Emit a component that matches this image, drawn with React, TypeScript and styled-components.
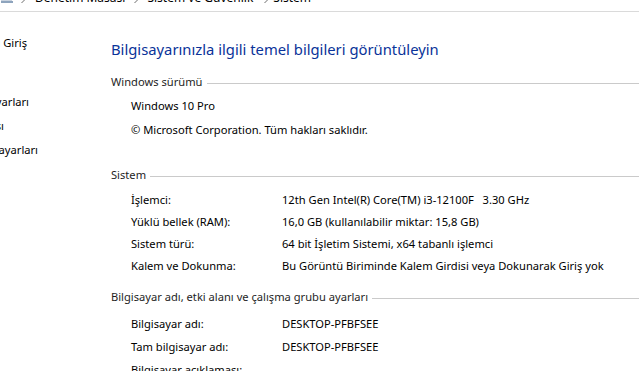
import React from 'react';
import styled, { createGlobalStyle } from 'styled-components';

const GlobalStyle = createGlobalStyle`
  html, body {
    margin: 0;
    padding: 0;
    background: #ffffff;
  }
  body {
    font-family: 'Noto Sans', 'Open Sans', sans-serif;
    font-size: 11.15px;
    color: #000000;
  }
`;

const Window = styled.div`
  width: 639px;
  height: 371px;
  overflow: hidden;
  background: #ffffff;
`;

// breadcrumb strip, scrolled so only the bottom of the text shows
const AddressBar = styled.div`
  height: 11px;
  border-bottom: 1px solid #dadada;
  overflow: hidden;
`;

const Crumbs = styled.div`
  display: flex;
  align-items: center;
  height: 18px;
  margin-top: -11px;
  line-height: 18px;
  font-size: 12px;
  color: #000;
`;

const Crumb = styled.span`
  margin-left: ${(p: { $gap: number }) => p.$gap}px;
  white-space: nowrap;
`;

const Chevron = styled.svg`
  width: 7px;
  height: 18px;
  margin-left: ${(p: { $gap: number }) => p.$gap}px;
  fill: none;
  stroke: #6d6d6d;
  stroke-width: 1;
`;

const Layout = styled.div`
  display: grid;
  grid-template-columns: 111px 1fr;
`;

const Nav = styled.nav`
  width: 60px;
  display: flex;
  flex-direction: column;
  overflow: hidden;
  padding-top: 21px;
`;

const NavLink = styled.div<{ $end: number; $top: number }>`
  display: flex;
  justify-content: flex-end;
  white-space: nowrap;
  height: 20px;
  line-height: 20px;
  margin-top: ${(p) => p.$top}px;
  padding-right: ${(p) => 60 - p.$end}px;
  color: #000;
`;

const Main = styled.main`
  display: flex;
  flex-direction: column;
`;

const Heading = styled.h1`
  margin: 26px 0 0;
  font-size: 14.8px;
  font-weight: 400;
  line-height: 22px;
  color: #0a3399;
  white-space: nowrap;
`;

const SectionTitle = styled.div<{ $top: number }>`
  display: flex;
  align-items: center;
  height: 20px;
  line-height: 20px;
  margin-top: ${(p) => p.$top}px;
  color: #1e1e1e;
  white-space: nowrap;

  &::after {
    content: '';
    flex: 1;
    height: 1px;
    margin: 2px 0 0 4px;
    background: #cacaca;
  }
`;

const Rows = styled.div<{ $top: number }>`
  display: flex;
  flex-direction: column;
  margin-top: ${(p) => p.$top}px;
  padding-left: 20px;
`;

const Row = styled.div<{ $h: number }>`
  display: grid;
  grid-template-columns: 151px 1fr;
  height: ${(p) => p.$h}px;
  line-height: ${(p) => p.$h}px;
  white-space: pre;
`;

const Label = styled.span<{ $wide?: boolean }>`
  grid-column: ${(p) => (p.$wide ? '1 / 3' : 'auto')};
`;
const Value = styled.span``;

const Field = ({ label, value, h }: { label: string; value?: string; h: number }) => (
  <Row $h={h}>
    {value === undefined ? (
      <Label $wide>{label}</Label>
    ) : (
      <>
        <Label>{label}</Label>
        <Value>{value}</Value>
      </>
    )}
  </Row>
);

const chevron = <polyline points='1.5 -2 5 1.5 1.5 5' />;

export default function App() {
  return (
    <Window>
      <GlobalStyle />
      <AddressBar>
        <Crumbs>
          <svg width='14' height='18' viewBox='0 0 14 18'>
            <rect x='1' y='9' width='11' height='3' fill='#c9d3df' />
            <rect x='1' y='12' width='12' height='2' fill='#8ea4bd' />
          </svg>
          <Chevron $gap={6} viewBox='0 0 7 18'>
            <g transform='translate(0 9)'>{chevron}</g>
          </Chevron>
          <Crumb $gap={8}>Denetim Masası</Crumb>
          <Chevron $gap={8} viewBox='0 0 7 18'>
            <g transform='translate(0 9)'>{chevron}</g>
          </Chevron>
          <Crumb $gap={7}>Sistem ve Güvenlik</Crumb>
          <Chevron $gap={10} viewBox='0 0 7 18'>
            <g transform='translate(0 9)'>{chevron}</g>
          </Chevron>
          <Crumb $gap={3}>Sistem</Crumb>
        </Crumbs>
      </AddressBar>

      <Layout>
        <Nav>
          <NavLink $end={27} $top={0}>Denetim Masası Giriş</NavLink>
          <NavLink $end={29} $top={39}>Uzak ayarları</NavLink>
          <NavLink $end={4} $top={4}>Sistem koruması</NavLink>
          <NavLink $end={38} $top={4}>Gelişmiş sistem ayarları</NavLink>
        </Nav>

        <Main>
          <Heading>Bilgisayarınızla ilgili temel bilgileri görüntüleyin</Heading>

          <SectionTitle $top={12}>Windows sürümü</SectionTitle>
          <Rows $top={2}>
            <Field h={24} label='Windows 10 Pro' />
            <Field h={24} label='© Microsoft Corporation. Tüm hakları saklıdır.' />
          </Rows>

          <SectionTitle $top={23}>Sistem</SectionTitle>
          <Rows $top={4}>
            <Field h={22} label='İşlemci:' value='12th Gen Intel(R) Core(TM) i3-12100F   3.30 GHz' />
            <Field h={22} label='Yüklü bellek (RAM):' value='16,0 GB (kullanılabilir miktar: 15,8 GB)' />
            <Field h={22} label='Sistem türü:' value='64 bit İşletim Sistemi, x64 tabanlı işlemci' />
            <Field h={22} label='Kalem ve Dokunma:' value='Bu Görüntü Biriminde Kalem Girdisi veya Dokunarak Giriş yok' />
          </Rows>

          <SectionTitle $top={10}>Bilgisayar adı, etki alanı ve çalışma grubu ayarları</SectionTitle>
          <Rows $top={5}>
            <Field h={23} label='Bilgisayar adı:' value='DESKTOP-PFBFSEE' />
            <Field h={23} label='Tam bilgisayar adı:' value='DESKTOP-PFBFSEE' />
            <Field h={23} label='Bilgisayar açıklaması:' value='' />
          </Rows>
        </Main>
      </Layout>
    </Window>
  );
}
